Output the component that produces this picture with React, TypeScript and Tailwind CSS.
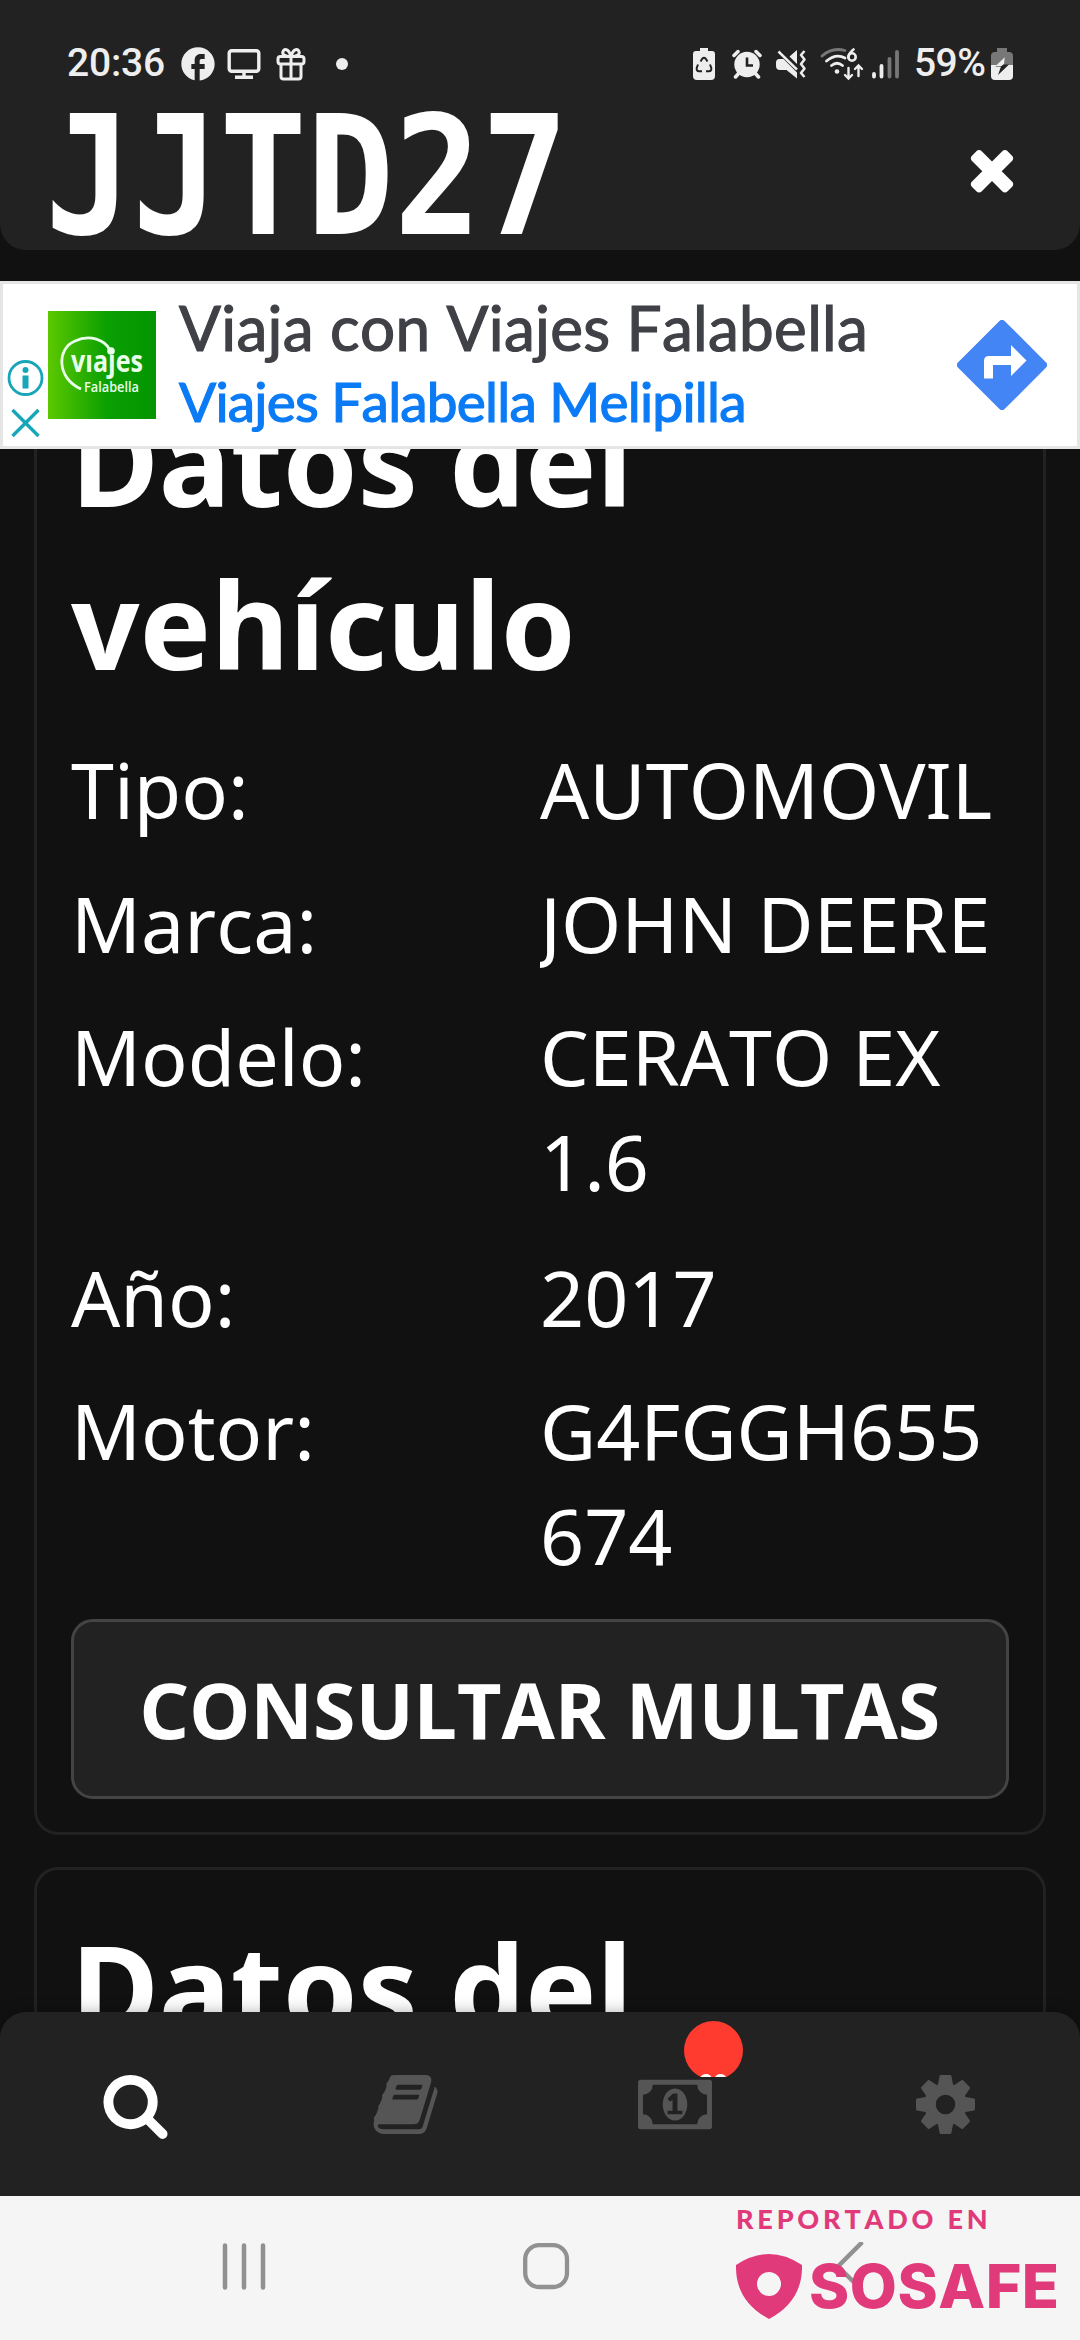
import type { ReactNode } from 'react';
import { MdFacebook } from 'react-icons/md';

const vehicleRows = [
    { label: 'Tipo:', value: 'AUTOMOVIL' },
    { label: 'Marca:', value: 'JOHN DEERE' },
    { label: 'Modelo:', value: 'CERATO EX 1.6' },
    { label: 'Año:', value: '2017' },
    { label: 'Motor:', value: 'G4FGGH655674' },
];

const icons = {
    close: 'M1490 1322q0 40-28 68l-136 136q-28 28-68 28t-68-28l-294-294-294 294q-28 28-68 28t-68-28l-136-136q-28-28-28-68t28-68l294-294-294-294q-28-28-28-68t28-68l136-136q28-28 68-28t68 28l294 294 294-294q28-28 68-28t68 28l136 136q28 28 28 68t-28 68l-294 294 294 294q28 28 28 68z',
    search: 'M1216 832q0-185-131.5-316.5t-316.5-131.5-316.5 131.5-131.5 316.5 131.5 316.5 316.5 131.5 316.5-131.5 131.5-316.5zm512 832q0 52-38 90t-90 38q-54 0-90-38l-343-342q-179 124-399 124-143 0-273.5-55.5t-225-150-150-225-55.5-273.5 55.5-273.5 150-225 225-150 273.5-55.5 273.5 55.5 225 150 150 225 55.5 273.5q0 220-124 399l343 343q37 37 37 90z',
    book: 'M1703 478q40 57 18 129l-275 906q-19 64-76.5 107.5t-122.5 43.5h-923q-77 0-148.5-53.5t-99.5-131.5q-24-67-2-127 0-4 3-27t4-37q1-8-3-21.5t-3-19.5q2-11 8-21t16.5-23.5 16.5-23.5q23-38 45-91.5t30-91.5q3-10 .5-30t-.5-28q3-11 17-28t17-23q21-36 42-92t25-90q1-9-2.5-32t.5-28q4-13 22-30.5t22-22.5q19-26 42.5-84.5t27.5-96.5q1-8-3-25.5t-2-26.5q2-8 9-18t18-23 17-21q8-12 16.5-30.5t15-35 16-36 19.5-32 26.5-23.5 36-11.5 47.5 5.5l-1 3q38-9 51-9h761q74 0 114 56t18 130l-274 906q-36 119-71.5 153.5t-128.5 34.5h-869q-27 0-38 15-11 16-1 43 24 70 144 70h923q29 0 56-15.5t35-41.5l300-987q7-22 5-57 38 15 59 43zm-1064 2q-4 13 2 22.5t20 9.5h608q13 0 25.5-9.5t16.5-22.5l21-64q4-13-2-22.5t-20-9.5h-608q-13 0-25.5 9.5t-16.5 22.5zm-83 256q-4 13 2 22.5t20 9.5h608q13 0 25.5-9.5t16.5-22.5l21-64q4-13-2-22.5t-20-9.5h-608q-13 0-25.5 9.5t-16.5 22.5z',
    money: 'M768 1152h384v-96h-128v-448h-114l-148 137 77 80q42-37 55-57h2v288h-128v96zm512-256q0 70-21 142t-59.5 134-101.5 101-138 39-138-39-101.5-101-59.5-134-21-142 21-142 59.5-134 101.5-101 138-39 138 39 101.5 101 59.5 134 21 142zm512 256v-512q-106 0-181-75t-75-181h-1152q0 106-75 181t-181 75v512q106 0 181 75t75 181h1152q0-106 75-181t181-75zm128-832v1152q0 26-19 45t-45 19h-1792q-26 0-45-19t-19-45v-1152q0-26 19-45t45-19h1792q26 0 45 19t19 45z',
};

function Icon({ path, wide, className }: { path: string; wide?: boolean; className: string }) {
    return (
        <svg viewBox={wide ? '0 0 1920 1792' : '0 0 1792 1792'} fill="currentColor" className={className}>
            <path d={path} />
        </svg>
    );
}

function CogIcon() {
    return (
        <svg viewBox="0 0 69 69" className="h-[69px] w-[69px]" fill="currentColor">
            {[0, 45, 90, 135, 180, 225, 270, 315].map(angle => (
                <path key={angle} d="M27 14.500L28.600 6q.2-1 1.200-1h9.400q1 0 1.200 1L42 14.500l2 5H25z" transform={`rotate(${angle} 34.500 34.500)`} />
            ))}
            <circle cx="34.500" cy="34.500" r="15.500" fill="none" stroke="currentColor" strokeWidth="11.500" />
        </svg>
    );
}

function Card({ children }: { children: ReactNode }) {
    return (
        <section className="rounded-[24px] border-3 border-[#222] px-[34px] pt-[35px] pb-[33px]">
            {children}
        </section>
    );
}

function StatusBar() {
    return (
        <div className="flex h-[112px] items-start justify-between pt-[44px] pr-[67px] pl-[67px] text-[#eee]">
            <div className="flex h-[39px] items-center">
                <span className="w-[111px] font-[Roboto,sans-serif] text-[39px] leading-[39px] font-medium tracking-[-0.2px]">20:36</span>
                <MdFacebook className="h-[40px] w-[40px]" />
                <svg viewBox="0 0 34 34" className="ml-[9px] h-[34px] w-[34px]" fill="none" stroke="currentColor" strokeWidth="3.4">
                    <rect x="2.2" y="3.7" width="29.6" height="20.6" rx="2.5" />
                    <path d="M17 24v6M8 30.3h18" />
                </svg>
                <svg viewBox="0 0 30 34" className="ml-[15px] h-[34px] w-[30px]" fill="none" stroke="currentColor" strokeWidth="3">
                    <rect x="2" y="9.5" width="26" height="7.5" rx="2.5" />
                    <path d="M5 17v12.5q0 2.500 2.500 2.500h15q2.500 0 2.500-2.500V17M15 10v22" />
                    <path d="M15 9.500C8 9.500 6 7 7 4.500C8.500 1 13 2 15 9.500C17 2 21.500 1 23 4.500C24 7 22 9.500 15 9.500z" />
                </svg>
                <span className="ml-[30px] h-[12px] w-[12px] rounded-full bg-[#eee]" />
            </div>
            <div className="flex h-[39px] items-center">
                <svg viewBox="0 0 22 32" className="h-[32px] w-[22px]">
                    <path d="M7 0h8v3h4q3 0 3 3v22q0 4-4 4H4q-4 0-4-4V6q0-3 3-3h4z" fill="currentColor" />
                    <g fill="none" stroke="#222" strokeWidth="2">
                        <path d="M7.500 13.500l2-3q1.500-1.500 3 0l2 3M17 16.500l1.300 3.500q.4 3-2.300 3.200h-3M9 23.200H6q-2.700-.2-2.300-3.200L5 16.500" />
                    </g>
                </svg>
                <svg viewBox="0 0 30 30" className="ml-[17px] h-[30px] w-[30px]">
                    <g stroke="currentColor" strokeWidth="3.500" strokeLinecap="round">
                        <path d="M2 6.500l4-4M28 6.500l-4-4M7 24l-3.500 4M23 24l3.500 4" />
                    </g>
                    <circle cx="15" cy="15.500" r="12.700" fill="currentColor" />
                    <path d="M15 8.500v8h6" fill="none" stroke="#222" strokeWidth="2.600" />
                </svg>
                <svg viewBox="0 0 30 30" className="ml-[14px] h-[30px] w-[30px]">
                    <path d="M3.500 10h4L21 23.500V29.500L10.500 21H4Q0 21 0 17v-3.500Q0 10 3.500 10zM13.500 7.500L21 1v14z" fill="currentColor" />
                    <path d="M2.500 2.500L21 20.500" stroke="currentColor" strokeWidth="2.600" />
                    <path d="M5.500 2.200L22 18.500" stroke="#222" strokeWidth="1.600" />
                    <path d="M28.500 2l-3.500 4 3.500 4.500-3.500 4.500 3.500 4.500-3.500 4.500 3.500 4" fill="none" stroke="currentColor" strokeWidth="2.500" strokeLinejoin="round" />
                </svg>
                <svg viewBox="0 0 44 34" className="ml-[14px] h-[34px] w-[44px]" fill="none" strokeWidth="2.800" strokeLinecap="round">
                    <path d="M2 9Q12 0 25 3.500" stroke="#777" />
                    <path d="M6.500 14Q16 6 25 11M11.500 18.500Q17 14 22.500 18.500" stroke="currentColor" />
                    <circle cx="17" cy="24.500" r="2.300" fill="currentColor" />
                    <path d="M28.500 21v10M25 28l3.500 3.500L32 28M38.500 29V19M35 22l3.500-3.500L42 22" stroke="currentColor" strokeWidth="2.400" />
                    <path d="M33.500 2.500Q29 6 28.500 10" stroke="currentColor" strokeWidth="2.600" />
                    <circle cx="32" cy="10" r="3.700" stroke="currentColor" strokeWidth="2.600" />
                </svg>
                <svg viewBox="0 0 28 30" className="ml-[8px] h-[30px] w-[28px]" strokeWidth="3.800" strokeLinecap="round">
                    <path d="M2 25v2.500M9.500 17v10.500" stroke="currentColor" />
                    <path d="M17.500 10v17.500M25 3v24.500" stroke="#777" />
                </svg>
                <span className="ml-[14px] w-[77px] font-[Roboto,sans-serif] text-[39px] leading-[39px] font-medium tracking-[-0.6px]">59%</span>
                <svg viewBox="0 0 22 32" className="h-[32px] w-[22px]">
                    <path d="M6 0h10v4h2q4 0 4 4v9H0V8q0-4 4-4h2z" fill="#777" />
                    <path d="M0 17h22v11q0 4-4 4H4q-4 0-4-4z" fill="currentColor" />
                    <path d="M14 9L4.500 18.500H10L7 27L18 16.500h-5.500z" fill="#222" />
                    <path d="M14 9L4.500 18h6L13 16z" fill="#eee" />
                </svg>
            </div>
        </div>
    );
}

function AdBanner() {
    return (
        <div className="relative z-10 mt-[31px] flex h-[168px] shrink-0 items-center border-3 border-[#e5e5e5] bg-white">
            <svg viewBox="0 0 42 162" className="h-[162px] w-[42px]" fill="none" stroke="#17a5b8" strokeWidth="2.800">
                <circle cx="22.500" cy="94" r="16.500" />
                <path d="M22.500 91.500v13" strokeWidth="6" />
                <circle cx="22.500" cy="86" r="3" fill="#17a5b8" stroke="none" />
                <path d="M9.500 126l26 26M35.500 126l-26 26" strokeWidth="3.400" />
            </svg>
            <svg viewBox="0 0 108 108" className="ml-[3px] h-[108px] w-[108px]">
                <defs>
                    <linearGradient id="falabella">
                        <stop offset="0" stopColor="#5cc800" />
                        <stop offset=".55" stopColor="#0a9f02" />
                        <stop offset="1" stopColor="#049500" />
                    </linearGradient>
                </defs>
                <rect width="108" height="108" fill="url(#falabella)" />
                <path d="M33 78C8 67 9 37 27 30C42 23 57 29 62 39" fill="none" stroke="#eaffea" strokeWidth="2.800" />
                <circle cx="63" cy="40" r="3.800" fill="#eaffea" />
                <text x="23" y="61" textLength="72" lengthAdjust="spacingAndGlyphs" fontSize="30" fontWeight="700" fill="#eaffea" className="font-[Open_Sans,sans-serif]">vıaȷes</text>
                <text x="36" y="81" textLength="55" lengthAdjust="spacingAndGlyphs" fontSize="15" fontWeight="600" fill="#eaffea" className="font-[Open_Sans,sans-serif]">Falabella</text>
            </svg>
            <div className="ml-[23px] flex h-full flex-1 flex-col whitespace-nowrap font-[Lato,sans-serif]">
                <span className="pt-[6px] text-[62px] leading-[74px] tracking-[0.3px] text-[#3f4146] [-webkit-text-stroke:1.2px_#3f4146]">Viaja con Viajes Falabella</span>
                <span className="pt-[4px] text-[55px] leading-[66px] tracking-[-0.8px] text-[#0b7bf5] [-webkit-text-stroke:1.2px_#0b7bf5]">Viajes Falabella Melipilla</span>
            </div>
            <svg viewBox="0 0 90 90" className="mr-[30px] h-[90px] w-[90px]">
                <rect x="12" y="12" width="66" height="66" rx="4" transform="rotate(45 45 45)" fill="#4385f5" />
                <path d="M27 58.500V41q0-5 5-5h22V25l15.500 15.500L54 56V45H36v13.500z" fill="#fff" />
            </svg>
        </div>
    );
}

export default function App() {
    return (
        <div className="relative flex h-[2340px] w-[1080px] flex-col overflow-hidden bg-[#111] font-[Noto_Sans,sans-serif] text-white [font-kerning:none]">
            <header className="h-[250px] shrink-0 rounded-b-[26px] bg-[#222]">
                <StatusBar />
                <div className="flex items-start justify-between pr-[56px] pl-[45px]">
                    <h1 className="mt-[4px] h-[118px] w-[530px] origin-left scale-x-[0.873] whitespace-nowrap font-[DejaVu_Sans_Mono,monospace] text-[166px] leading-[122px] font-bold">JJTD27</h1>
                    <button className="mt-[25px]">
                        <Icon path={icons.close} className="h-[64px] w-[64px]" />
                    </button>
                </div>
            </header>

            <main className="flex min-h-0 flex-1 flex-col overflow-hidden">
                <AdBanner />
                {/* Scrolled content passes under the banner */}
                <div className="-mt-[108px] flex flex-col gap-[32px] px-[34px]">
                    <Card>
                        <h2 className="text-[120px] leading-[163px] font-bold">Datos del<br />vehículo</h2>
                        <dl className="mt-[32px] flex flex-col gap-[28.500px] text-[77.200px] leading-[105px]">
                            {vehicleRows.map(row => (
                                <div key={row.label} className="grid grid-cols-2">
                                    <dt>{row.label}</dt>
                                    <dd className={row.label === 'Modelo:' ? 'overflow-hidden pb-[2px] wrap-break-word' : 'overflow-hidden wrap-break-word'}>{row.value}</dd>
                                </div>
                            ))}
                        </dl>
                        <button className="mt-[31px] h-[180px] w-full rounded-[22px] border-3 border-[#444] bg-[#222] text-[77.200px] leading-[105px] font-bold">
                            CONSULTAR MULTAS
                        </button>
                    </Card>
                    <Card>
                        <h2 className="text-[120px] leading-[163px] font-bold">Datos del</h2>
                    </Card>
                </div>
            </main>

            <nav className="relative z-10 grid h-[184px] shrink-0 grid-cols-4 rounded-t-[26px] bg-[#222] pt-[58px] text-[#555] shadow-[0_0_16px_rgba(0,0,0,0.3)]">
                <div className="flex justify-center text-white">
                    <Icon path={icons.search} className="h-[69px] w-[69px]" />
                </div>
                <div className="flex justify-center">
                    <Icon path={icons.book} className="h-[69px] w-[69px]" />
                </div>
                <div className="relative flex justify-center">
                    <Icon path={icons.money} wide className="h-[69px] w-[74px]" />
                    <svg viewBox="0 0 60 56" className="absolute -top-[49px] left-[144px] h-[56px] w-[60px]">
                        <circle cx="29.500" cy="29.500" r="29.500" fill="#ff3b30" />
                        <ellipse cx="22" cy="57" rx="5.500" ry="4" fill="#fff" />
                        <ellipse cx="36.500" cy="57" rx="5.500" ry="4" fill="#fff" />
                    </svg>
                </div>
                <div className="flex justify-center">
                    <CogIcon />
                </div>
            </nav>

            {/* Android navigation bar */}
            <footer className="relative z-20 h-[144px] shrink-0 bg-[#f5f5f5]">
                <div className="flex items-center pt-[46px] pl-[222px]">
                    <svg viewBox="0 0 44 48" className="h-[48px] w-[44px]" stroke="#919191" strokeWidth="4.500" strokeLinecap="round">
                        <path d="M3 3.500v42M22 3.500v42M41 3.500v42" />
                    </svg>
                    <svg viewBox="0 0 48 48" className="ml-[256px] h-[48px] w-[48px]" fill="none" stroke="#919191" strokeWidth="4.300">
                        <rect x="3.200" y="3.200" width="41.800" height="41.800" rx="14" />
                    </svg>
                    <svg viewBox="0 0 30 48" className="ml-[265px] h-[48px] w-[30px]" fill="none" stroke="#919191" strokeWidth="4.500" strokeLinecap="round">
                        <path d="M26 1.500L3 24.500L26 47" />
                    </svg>
                </div>
                <div className="absolute top-[8px] left-[736px] flex flex-col text-[#e03a7b]">
                    <span className="font-[Lato,sans-serif] text-[27px] leading-[30px] font-black tracking-[3.800px] whitespace-nowrap">REPORTADO EN</span>
                    <div className="mt-[20px] flex items-center">
                        <svg viewBox="0 0 66 65" className="h-[65px] w-[66px]" fill="currentColor" fillRule="evenodd">
                            <path d="M0 11Q33-11 66 11Q67 47 33 65Q-1 47 0 11zM33 18a12 12 0 1 0 0 24a12 12 0 1 0 0-24z" />
                        </svg>
                        <span className="ml-[7px] font-[Inter,sans-serif] text-[61px] leading-[65px] font-extrabold tracking-[0.5px]">SOSAFE</span>
                    </div>
                </div>
            </footer>
        </div>
    );
}
